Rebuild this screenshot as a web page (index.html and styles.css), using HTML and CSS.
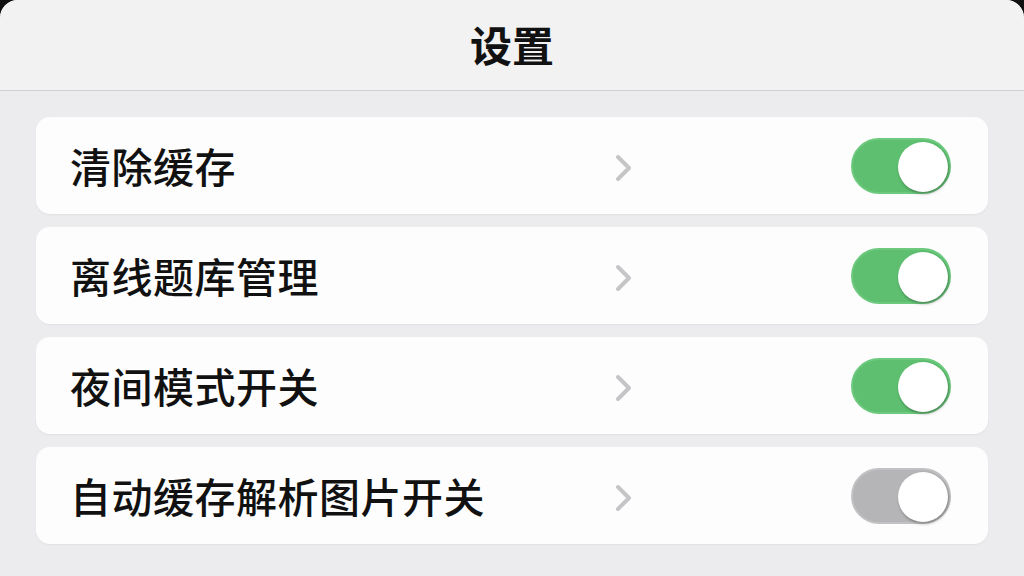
FILE: index.html
```html
<!DOCTYPE html>
<html lang="zh-CN">
<head>
<meta charset="utf-8">
<title>设置</title>
<link rel="stylesheet" href="styles.css">
</head>
<body>
<div class="screen">
  <header class="topbar"><h1 class="title">设置</h1></header>
  <main class="list">
    <div class="row">
      <span class="label">清除缓存</span>
      <svg class="chev" viewBox="0 0 24 30" width="24" height="30"><path d="M6 4 L17 15 L6 26" fill="none" stroke="#c5c5c7" stroke-width="4" stroke-linecap="round" stroke-linejoin="round"/></svg>
      <span class="spacer"></span>
      <span class="toggle on"><span class="knob"></span></span>
    </div>
    <div class="row">
      <span class="label">离线题库管理</span>
      <svg class="chev" viewBox="0 0 24 30" width="24" height="30"><path d="M6 4 L17 15 L6 26" fill="none" stroke="#c5c5c7" stroke-width="4" stroke-linecap="round" stroke-linejoin="round"/></svg>
      <span class="spacer"></span>
      <span class="toggle on"><span class="knob"></span></span>
    </div>
    <div class="row">
      <span class="label">夜间模式开关</span>
      <svg class="chev" viewBox="0 0 24 30" width="24" height="30"><path d="M6 4 L17 15 L6 26" fill="none" stroke="#c5c5c7" stroke-width="4" stroke-linecap="round" stroke-linejoin="round"/></svg>
      <span class="spacer"></span>
      <span class="toggle on"><span class="knob"></span></span>
    </div>
    <div class="row">
      <span class="label">自动缓存解析图片开关</span>
      <svg class="chev" viewBox="0 0 24 30" width="24" height="30"><path d="M6 4 L17 15 L6 26" fill="none" stroke="#c5c5c7" stroke-width="4" stroke-linecap="round" stroke-linejoin="round"/></svg>
      <span class="spacer"></span>
      <span class="toggle off"><span class="knob"></span></span>
    </div>
  </main>
</div>
</body>
</html>
```
FILE: styles.css
```css
html {
  background: #111;
}
body {
  margin: 0;
  font-family: "Noto Sans CJK SC", "Noto Sans", sans-serif;
  color: #111;
}
.screen {
  width: 1024px;
  height: 576px;
  background: #ececef;
  border-radius: 18px 18px 0 0;
  overflow: hidden;
}
.topbar {
  height: 90px;
  background: #f2f2f2;
  border-bottom: 1px solid #cfcfd1;
  display: flex;
  align-items: center;
  justify-content: center;
}
.title {
  margin: 0;
  font-size: 42px;
  font-weight: 700;
  line-height: 1;
  padding-bottom: 2px;
}
.list {
  padding: 26px 36px 0 36px;
  display: flex;
  flex-direction: column;
  gap: 13px;
}
.row {
  height: 97px;
  background: #fdfdfd;
  border-radius: 14px;
  box-shadow: 0 1px 2px rgba(0,0,0,0.05);
  display: grid;
  grid-template-columns: 542px 24px 1fr 100px;
  align-items: center;
  padding: 0 37px 0 34px;
}
.label {
  font-size: 41px;
  font-weight: 500;
  line-height: 1;
  white-space: nowrap;
  letter-spacing: 0.5px;
}
.chev {
  display: block;
  margin-top: 4px;
}
.toggle {
  position: relative;
  width: 100px;
  height: 56px;
  border-radius: 28px;
  box-sizing: border-box;
}
.toggle.on {
  background: #5dbf6f;
  border: 2px solid #6cc97d;
}
.toggle.off {
  background: #b5b5b7;
  border: 2px solid #c2c2c4;
}
.knob {
  position: absolute;
  right: 1px;
  top: 2px;
  width: 50px;
  height: 50px;
  border-radius: 50%;
  background: #fff;
  box-shadow: 1px 2px 3px rgba(0,0,0,0.3);
}
```
